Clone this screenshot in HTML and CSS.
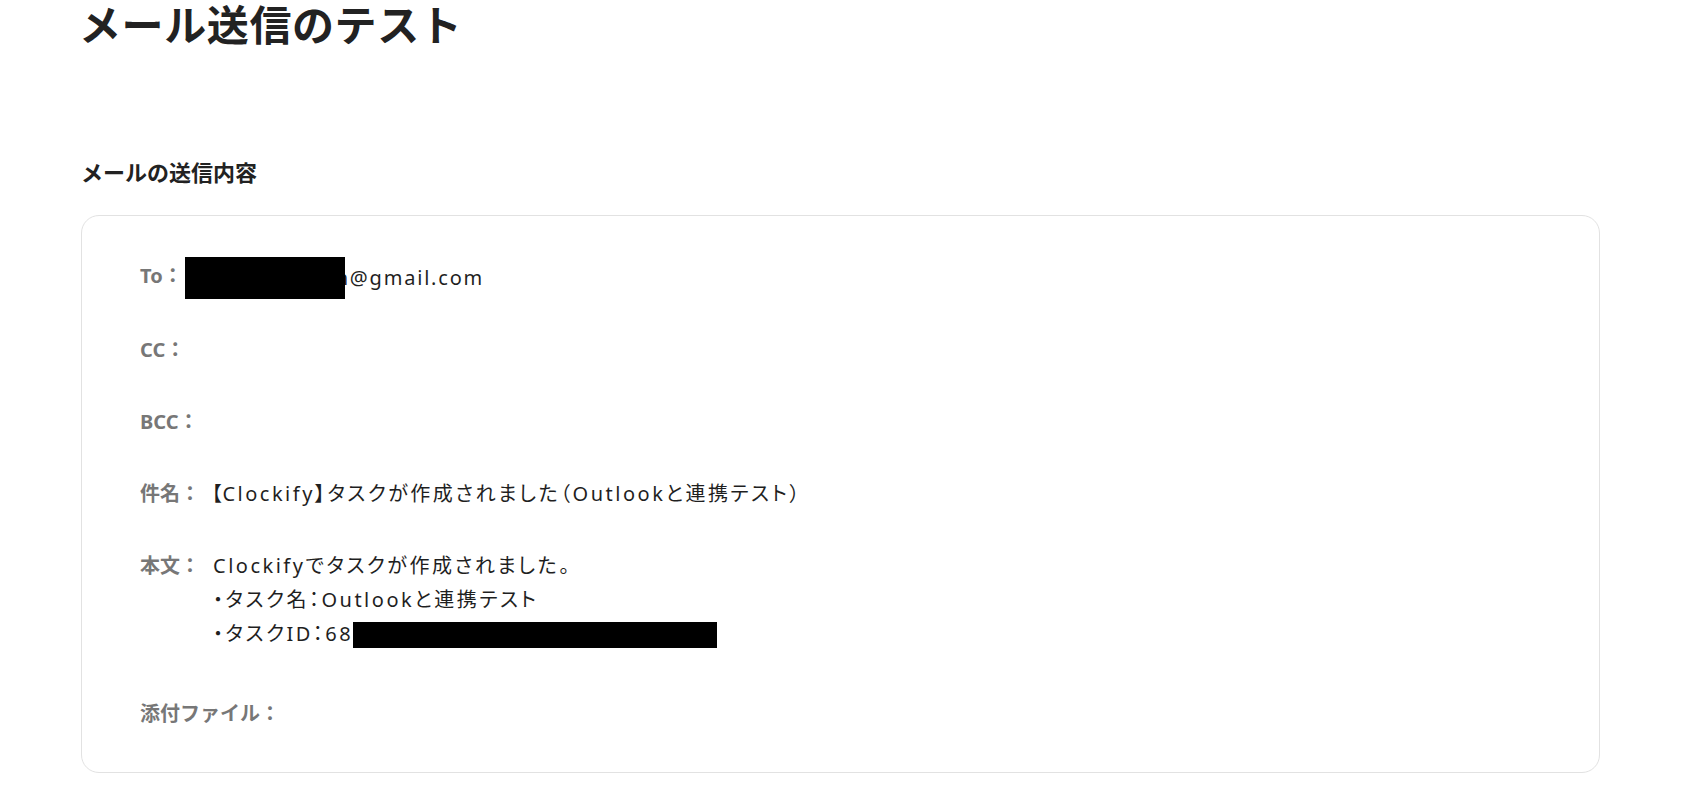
FILE: index.html
```html
<!DOCTYPE html>
<html lang="ja">
<head>
<meta charset="utf-8">
<title>メール送信のテスト</title>
<link rel="stylesheet" href="styles.css">
</head>
<body>
<main class="page">
  <h1 class="title">メール送信のテスト</h1>
  <h2 class="section-title">メールの送信内容</h2>
  <section class="card">
    <div class="row">
      <span class="label">To：</span>
      <span class="value"><span class="redact redact-to"></span><span class="after-redact">n@gmail.com</span></span>
    </div>
    <div class="row">
      <span class="label">CC：</span>
      <span class="value"></span>
    </div>
    <div class="row">
      <span class="label">BCC：</span>
      <span class="value"></span>
    </div>
    <div class="row">
      <span class="label">件名：</span>
      <span class="value"><span class="full-bracket">【</span>Clockify】タスクが作成されました（Outlookと連携テスト）</span>
    </div>
    <div class="row row-body">
      <span class="label">本文：</span>
      <div class="value body-text">
        <div>Clockifyでタスクが作成されました。</div>
        <div>・タスク名：Outlookと連携テスト</div>
        <div>・タスクID：68<span class="redact redact-id"></span></div>
      </div>
    </div>
    <div class="row">
      <span class="label">添付ファイル：</span>
      <span class="value"></span>
    </div>
  </section>
</main>
</body>
</html>
```

FILE: styles.css
```css
html, body {
  margin: 0;
  background: #ffffff;
}

body {
  font-family: "Noto Sans", "Noto Sans CJK JP", sans-serif;
  color: #222222;
}

.page {
  padding: 0 95px 40px 81px;
}

.title {
  margin: 0 0 0 -2px;
  font-size: 42px;
  font-weight: 700;
  line-height: 46px;
  letter-spacing: 0.6px;
  font-family: "Noto Sans CJK JP", sans-serif;
  color: #222222;
}

.section-title {
  margin: 109px 0 0;
  font-size: 22px;
  font-weight: 700;
  line-height: 32px;
  font-family: "Noto Sans CJK JP", sans-serif;
  color: #222222;
}

.card {
  margin-top: 28px;
  border: 1px solid #e2e2e2;
  border-radius: 18px;
  padding: 43px 58px 41px;
  display: flex;
  flex-direction: column;
  gap: 38px;
}

.row {
  display: flex;
  align-items: flex-start;
  gap: 2px;
  line-height: 34px;
}

.row-body {
  margin-bottom: 8px;
}

.label {
  font-size: 20px;
  font-weight: 700;
  color: #777777;
  white-space: nowrap;
}

.value {
  font-size: 20px;
  color: #1f1f1f;
  letter-spacing: 0.125em;
  font-feature-settings: "palt" 1;
  min-height: 34px;
}

.full-bracket {
  font-feature-settings: "palt" 0;
  letter-spacing: 0.02em;
}

.body-text {
  margin-left: 11px;
}

.redact {
  display: inline-block;
  background: #000000;
  vertical-align: middle;
}

.redact-to {
  width: 160px;
  height: 42px;
  margin: -4px -9px -4px 0;
  position: relative;
  z-index: 1;
}

.after-redact {
  vertical-align: middle;
  letter-spacing: 0.09em;
}

.redact-id {
  width: 364px;
  height: 26px;
  margin-left: 0;
}
```
